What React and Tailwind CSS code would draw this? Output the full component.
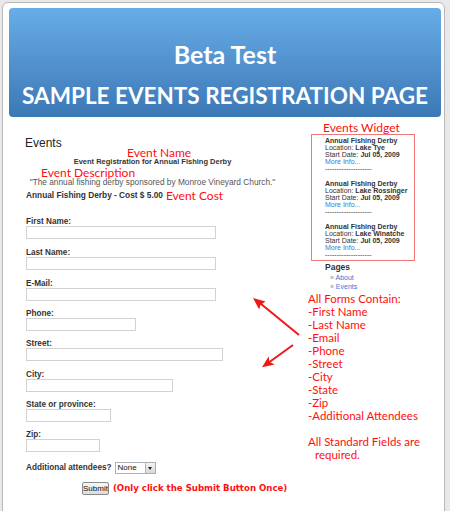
const SANS = "font-['Liberation_Sans',Arial,sans-serif]";
const RED = "font-['Lato','Liberation_Sans',sans-serif] text-[#ff0d0d]";

function Field({ label, width, mt }) {
  return (
    <div className={`ml-[1px] flex flex-col ${mt}`}>
      <div className="h-[9px] text-[8.2px] font-bold leading-[9px] text-[#333]">{label}</div>
      <div className={`h-[13px] border border-[#d2d2d2] bg-white ${width}`} />
    </div>
  );
}

function Entry({ loc, last }) {
  return (
    <div className={`text-[7px] leading-[7px] text-[#333] ${last ? "" : "mb-[8px]"}`}>
      <div className="font-bold">Annual Fishing Derby</div>
      <div>
        Location: <span className="font-bold">{loc}</span>
      </div>
      <div>
        Start Date: <span className="font-bold">Jul 05, 2009</span>
      </div>
      <div className="text-[#3a78d4]">More Info...</div>
      <div>--------------------</div>
    </div>
  );
}

export default function App() {
  const fields = [
    ["First Name:", "w-[190px]", "mt-[16px]"],
    ["Last Name:", "w-[190px]", "mt-[9px]"],
    ["E-Mail:", "w-[190px]", "mt-[9px]"],
    ["Phone:", "w-[110px]", "mt-[8px]"],
    ["Street:", "w-[197px]", "mt-[8px]"],
    ["City:", "w-[147px]", "mt-[9px]"],
    ["State or province:", "w-[85px]", "mt-[8px]"],
    ["Zip:", "w-[74px]", "mt-[8px]"],
  ];
  const notes = [
    "All Forms Contain:",
    "-First Name",
    "-Last Name",
    "-Email",
    "-Phone",
    "-Street",
    "-City",
    "-State",
    "-Zip",
    "-Additional Attendees",
  ];
  return (
    <div className={`relative h-[511px] w-[450px] overflow-hidden bg-[#e8e8e8] pl-[2px] pr-[5px] pt-[2px] ${SANS}`}>
      <div className="h-[560px] rounded-t-[6px] border border-[#b8b8b8] bg-white pl-[6px] pr-[3px] pt-[5px]">
        {/* Banner */}
        <div className="flex h-[109px] flex-col items-center rounded-[4px] bg-gradient-to-b from-[#68ade8] to-[#3c78b6] pt-[31px] font-['Lato',sans-serif] text-white">
          <div className="text-[25px] font-bold leading-[30px]">Beta Test</div>
          <div className="mt-[14px] text-[22.5px] font-bold leading-[26px]">SAMPLE EVENTS REGISTRATION PAGE</div>
        </div>

        <div className="flex">
          {/* Main column */}
          <div className="w-[302px] shrink-0 pl-[16px]">
            <div className="w-[255px]">
              <div className="mt-[19px] h-[14px] text-[12px] leading-[14px] text-[#222]">Events</div>
              <div className={`-mt-[2px] h-[9px] pl-[102px] text-[12px] leading-[9px] ${RED}`}>Event Name</div>
              <div className="mt-[1px] h-[8px] text-center text-[7.5px] font-bold leading-[8px] text-[#333]">
                Event Registration for Annual Fishing Derby
              </div>
              <div className={`mt-[2px] h-[9px] pl-[16px] text-[12px] leading-[9px] ${RED}`}>Event Description</div>
              <div className="mt-[1px] h-[8px] whitespace-nowrap text-center text-[8.3px] leading-[8px] text-[#555]">
                "The annual fishing derby sponsored by Monroe Vineyard Church."
              </div>
              <div className="ml-[1px] mt-[4px] flex h-[11px] items-center gap-[3px] whitespace-nowrap">
                <span className="text-[8.3px] font-bold text-[#333]">Annual Fishing Derby - Cost $ 5.00</span>
                <span className={`text-[12px] ${RED}`}>Event Cost</span>
              </div>
              {fields.map(([l, w, m]) => (
                <Field key={l} label={l} width={w} mt={m} />
              ))}
              <div className="ml-[1px] mt-[10px] flex h-[12px] items-center gap-[3px]">
                <span className="text-[8.2px] font-bold text-[#333]">Additional attendees?</span>
                <div className="flex h-[12px] w-[41px] items-center border border-[#a9b0b8] bg-white">
                  <span className="flex-1 pl-[2px] text-[8px] leading-[10px] text-[#111]">None</span>
                  <div className="flex h-[10px] w-[10px] items-center justify-center border-l border-[#b5b5b5] bg-gradient-to-b from-[#f4f4f4] to-[#d8d8d8]">
                    <div className="h-0 w-0 border-x-[2.5px] border-t-[3px] border-x-transparent border-t-[#222]" />
                  </div>
                </div>
              </div>
              <div className="ml-[57px] mt-[8px] flex h-[13px] items-center gap-[4px] whitespace-nowrap">
                <div className="flex h-[13px] w-[36px] items-center justify-center rounded-[2px] border border-[#8a8a8a] bg-gradient-to-b from-[#f7f7f7] to-[#dcdcdc] text-[8px] text-[#111]">
                  Submit
                </div>
                <span className="font-['DejaVu_Sans',Verdana,sans-serif] text-[8.6px] font-bold text-[#ff1010]">
                  (Only click the Submit Button Once)
                </span>
              </div>
            </div>
          </div>

          {/* Sidebar */}
          <div className="w-[120px] shrink-0 pt-[5px]">
            <div className={`h-[12px] pl-[12px] text-[12px] leading-[12px] ${RED}`}>Events Widget</div>
            <div className="w-[104px] border border-[#f07878] pb-[2px] pl-[13px] pt-[2px]">
              <Entry loc="Lake Tye" />
              <Entry loc="Lake Rossinger" />
              <Entry loc="Lake Winatche" last />
            </div>
            <div className="mt-[1px] h-[10px] pl-[14px] text-[8.5px] font-bold leading-[10px] text-[#333]">Pages</div>
            <div className="mt-[1px] pl-[19px] text-[7px] leading-[9px]">
              <div>
                <span className="text-[#888]">»</span> <span className="text-[#3a78d4]">About</span>
              </div>
              <div>
                <span className="text-[#888]">»</span> <span className="text-[#3a78d4]">Events</span>
              </div>
            </div>
            <div className={`-ml-[3px] mt-[1px] text-[11.5px] leading-[13px] ${RED}`}>
              {notes.map((n) => (
                <div key={n} className="whitespace-nowrap">{n}</div>
              ))}
              <div className="h-[13px]" />
              <div className="whitespace-nowrap">All Standard Fields are</div>
              <div className="pl-[7px]">required.</div>
            </div>
          </div>
        </div>
      </div>

      {/* Annotation arrows */}
      <svg className="pointer-events-none absolute left-0 top-0" width="450" height="511" viewBox="0 0 450 511">
        <line x1="299" y1="335" x2="258" y2="301.5" stroke="#ee1818" strokeWidth="2" />
        <polygon points="253,298 265.5,301.6 260.5,305 259.2,309.4" fill="#ee1818" />
        <line x1="293" y1="345" x2="266" y2="364.5" stroke="#ee1818" strokeWidth="2" />
        <polygon points="262,367.3 274.7,364.4 269.3,361.8 268.8,356.2" fill="#ee1818" />
      </svg>
    </div>
  );
}
